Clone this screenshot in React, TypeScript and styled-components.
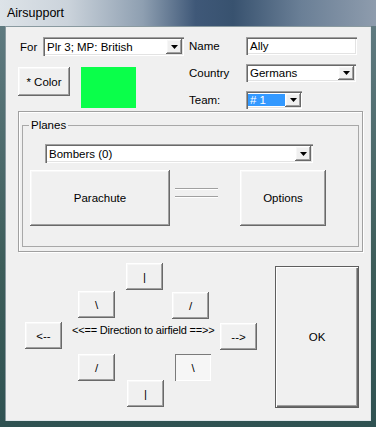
import React from 'react'
import styled, { createGlobalStyle, css } from 'styled-components'

const GlobalStyle = createGlobalStyle`
    html, body {
        margin: 0;
        padding: 0;
        background: #f0f0f0;
    }
    * {
        box-sizing: border-box;
    }
`

const uiFont = `'Liberation Sans', Arial, sans-serif`

const Window = styled.div`
    width: 376px;
    height: 427px;
    display: flex;
    flex-direction: column;
    background: #3c5a57;
    font-family: ${uiFont};
    font-size: 11px;
    color: #000;
    overflow: hidden;
`

const TitleBar = styled.div`
    height: 26px;
    flex: none;
    display: flex;
    align-items: center;
    padding-left: 7px;
    padding-bottom: 1px;
    font-size: 12.5px;
    color: #000;
    background: linear-gradient(
        90deg,
        #dde3e8 0%,
        #cbd3db 18%,
        #8e9fb1 38%,
        #3f5878 52%,
        #38526f 62%,
        #6a7f96 80%,
        #8e9cad 100%
    );
`

const Frame = styled.div`
    flex: 1;
    display: flex;
    padding: 0 5px 6px 5px;
    background: linear-gradient(180deg, #5f7a80 0%, #3d5d5a 60%, #2f5252 100%);
`

const Client = styled.div`
    flex: 1;
    background: #f0f0f0;
    box-shadow: inset 1px 1px #8a9aa0, inset -1px -1px #dfe6ea;
    padding-top: 11px;
    display: flex;
    flex-direction: column;
`

const TopArea = styled.div`
    display: flex;
    height: 71px;
`

const LeftCol = styled.div`
    margin-left: 13px;
    width: 171px;
    display: flex;
    flex-direction: column;
`

const ForRow = styled.div`
    display: flex;
    align-items: center;
    height: 19px;
`

const Label = styled.span<{ $w?: number }>`
    display: inline-block;
    width: ${(p) => (p.$w ? `${p.$w}px` : 'auto')};
    white-space: nowrap;
    font-size: 11.5px;
`

const ForLabel = styled(Label)`
    margin-left: 2px;
`

const ColorRow = styled.div`
    display: flex;
    gap: 11px;
    margin-top: 11px;
`

const Swatch = styled.div`
    width: 55px;
    height: 41px;
    background: #0aff4a;
`

const RightCol = styled.div`
    display: grid;
    grid-template-columns: 57px auto;
    grid-auto-rows: min-content;
    row-gap: 9px;
    align-items: center;
    align-content: start;
`

const sunken = css`
    background: #fff;
    box-shadow: inset 1px 1px #a0a0a0, inset 2px 2px #696969, inset -1px -1px #ffffff,
        inset -2px -2px #e3e3e3;
`

const TextInput = styled.div<{ $w: number; $h: number }>`
    ${sunken};
    width: ${(p) => p.$w}px;
    height: ${(p) => p.$h}px;
    display: flex;
    align-items: center;
    padding-left: 4px;
    font-size: 11.5px;
`

const ComboBox = styled.div<{ $w: number; $h: number }>`
    ${sunken};
    width: ${(p) => p.$w}px;
    height: ${(p) => p.$h}px;
    display: flex;
    align-items: stretch;
    padding: 2px;
`

const ComboValue = styled.div<{ $selected?: boolean }>`
    flex: 1;
    display: flex;
    align-items: center;
    padding-left: 2px;
    font-size: 11.5px;
    white-space: nowrap;
    overflow: hidden;
    ${(p) =>
        p.$selected &&
        css`
            flex: none;
            width: 37px;
            margin: 1px 0 1px 0;
            background: #3399ff;
            color: #fff;
        `}
`

const ComboSpacer = styled.div`
    flex: 1;
`

const raised = css`
    background: #f0f0f0;
    box-shadow: inset -1px -1px #696969, inset 1px 1px #ffffff, inset -2px -2px #a0a0a0,
        inset 2px 2px #f7f7f7;
`

const ArrowButton = styled.div`
    ${raised};
    width: 16px;
    flex: none;
    display: flex;
    align-items: center;
    justify-content: center;
`

const Button = styled.button<{ $w: number; $h: number; $pressed?: boolean }>`
    ${raised};
    width: ${(p) => p.$w}px;
    height: ${(p) => p.$h}px;
    padding: 0;
    margin: 0;
    border: none;
    font-family: ${uiFont};
    font-size: 11.5px;
    color: #000;
    cursor: default;
    ${(p) =>
        p.$pressed &&
        css`
            background: #f6f6f6;
            box-shadow: inset 1px 1px #7a7a7a, inset -1px -1px #ffffff;
        `}
`

const OuterFrame = styled.div`
    margin: 3px 0 0 13px;
    width: 345px;
    height: 141px;
    border: 1px solid #a0a0a0;
    box-shadow: inset 1px 1px #ffffff, 1px 1px #ffffff;
    padding: 7px 0 0 3px;
`

const Group = styled.fieldset`
    margin: 0;
    width: 337px;
    padding: 0 0 20px 0;
    border: 1px solid #a8a8a8;
    min-inline-size: 0;
`

const Legend = styled.legend`
    margin-left: 6px;
    padding: 0 2px;
    line-height: 12px;
    font-size: 11.5px;
`

const PlaneButtons = styled.div`
    display: flex;
    margin: 7px 0 0 7px;
    height: 56px;
`

const Lines = styled.div`
    width: 43px;
    margin: 18px 22px 0 5px;
    display: flex;
    flex-direction: column;
    gap: 7px;
`

const EtchedLine = styled.div`
    height: 1px;
    background: #a0a0a0;
    box-shadow: 0 1px #ffffff;
`

const BottomArea = styled.div`
    display: flex;
    margin: 11px 0 0 20px;
`

const Compass = styled.div`
    display: grid;
    grid-template-columns: 53px 48px 46px 48px 37px;
    grid-template-rows: 28px 31px 32px 26px 27px;
`

const Cell = styled.div<{ $col: number; $row: number; $dx?: number; $dy?: number }>`
    grid-column: ${(p) => p.$col};
    grid-row: ${(p) => p.$row};
    margin-left: ${(p) => p.$dx ?? 0}px;
    margin-top: ${(p) => p.$dy ?? 0}px;
`

const MiddleRow = styled.div`
    grid-column: 1 / -1;
    grid-row: 3;
    display: flex;
    align-items: flex-start;
`

const DirectionText = styled.span`
    margin: 2px 7px 0 10px;
    width: 141px;
    white-space: nowrap;
    letter-spacing: -0.2px;
`

const OkButton = styled(Button)`
    margin: 3px 0 0 18px;
    border: 1px solid #5e5e5e;
    box-shadow: inset 1px 1px #ffffff, inset -1px -1px #696969, inset -2px -2px #a0a0a0;
`

const Caret = () => (
    <svg width='7' height='4' viewBox='0 0 7 4'>
        <path d='M0 0h7L3.5 4z' fill='#000' />
    </svg>
)

const Combo = ({
    w,
    h,
    value,
    selected,
    className,
}: {
    w: number
    h: number
    value: string
    selected?: boolean
    className?: string
}) => (
    <ComboBox $w={w} $h={h} className={className}>
        <ComboValue $selected={selected}>{value}</ComboValue>
        {selected && <ComboSpacer />}
        <ArrowButton>
            <Caret />
        </ArrowButton>
    </ComboBox>
)

const PlanesCombo = styled(Combo)`
    margin: 13px 0 0 22px;
`

const App = () => {
    return (
        <>
            <GlobalStyle />
            <Window>
                <TitleBar>Airsupport</TitleBar>
                <Frame>
                    <Client>
                        <TopArea>
                            <LeftCol>
                                <ForRow>
                                    <ForLabel $w={23}>For</ForLabel>
                                    <Combo w={141} h={19} value='Plr 3; MP: British' />
                                </ForRow>
                                <ColorRow>
                                    <Button $w={52} $h={29}>
                                        * Color
                                    </Button>
                                    <Swatch />
                                </ColorRow>
                            </LeftCol>
                            <RightCol>
                                <Label>Name</Label>
                                <TextInput $w={111} $h={18}>
                                    Ally
                                </TextInput>
                                <Label>Country</Label>
                                <Combo w={110} h={18} value='Germans' />
                                <Label>Team:</Label>
                                <Combo w={56} h={18} value='# 1' selected />
                            </RightCol>
                        </TopArea>

                        <OuterFrame>
                            <Group>
                                <Legend>Planes</Legend>
                                <PlanesCombo w={268} h={19} value='Bombers (0)' />
                                <PlaneButtons>
                                    <Button $w={140} $h={56}>
                                        Parachute
                                    </Button>
                                    <Lines>
                                        <EtchedLine />
                                        <EtchedLine />
                                    </Lines>
                                    <Button $w={86} $h={56}>
                                        Options
                                    </Button>
                                </PlaneButtons>
                            </Group>
                        </OuterFrame>

                        <BottomArea>
                            <Compass>
                                <Cell $col={3} $row={1}>
                                    <Button $w={37} $h={27}>|</Button>
                                </Cell>
                                <Cell $col={2} $row={2}>
                                    <Button $w={37} $h={27}>\</Button>
                                </Cell>
                                <Cell $col={4} $row={2} $dy={1}>
                                    <Button $w={37} $h={27}>/</Button>
                                </Cell>
                                <MiddleRow>
                                    <Button $w={37} $h={27}>
                                        &lt;--
                                    </Button>
                                    <DirectionText>&lt;&lt;== Direction to airfield ==&gt;&gt;</DirectionText>
                                    <Button $w={37} $h={27} style={{ marginTop: 1 }}>
                                        --&gt;
                                    </Button>
                                </MiddleRow>
                                <Cell $col={2} $row={4}>
                                    <Button $w={37} $h={27}>/</Button>
                                </Cell>
                                <Cell $col={4} $row={4} $dx={3}>
                                    <Button $w={36} $h={27} $pressed>
                                        \
                                    </Button>
                                </Cell>
                                <Cell $col={3} $row={5} $dx={1}>
                                    <Button $w={37} $h={27}>|</Button>
                                </Cell>
                            </Compass>
                            <OkButton $w={84} $h={142}>
                                OK
                            </OkButton>
                        </BottomArea>
                    </Client>
                </Frame>
            </Window>
        </>
    )
}

export default App
